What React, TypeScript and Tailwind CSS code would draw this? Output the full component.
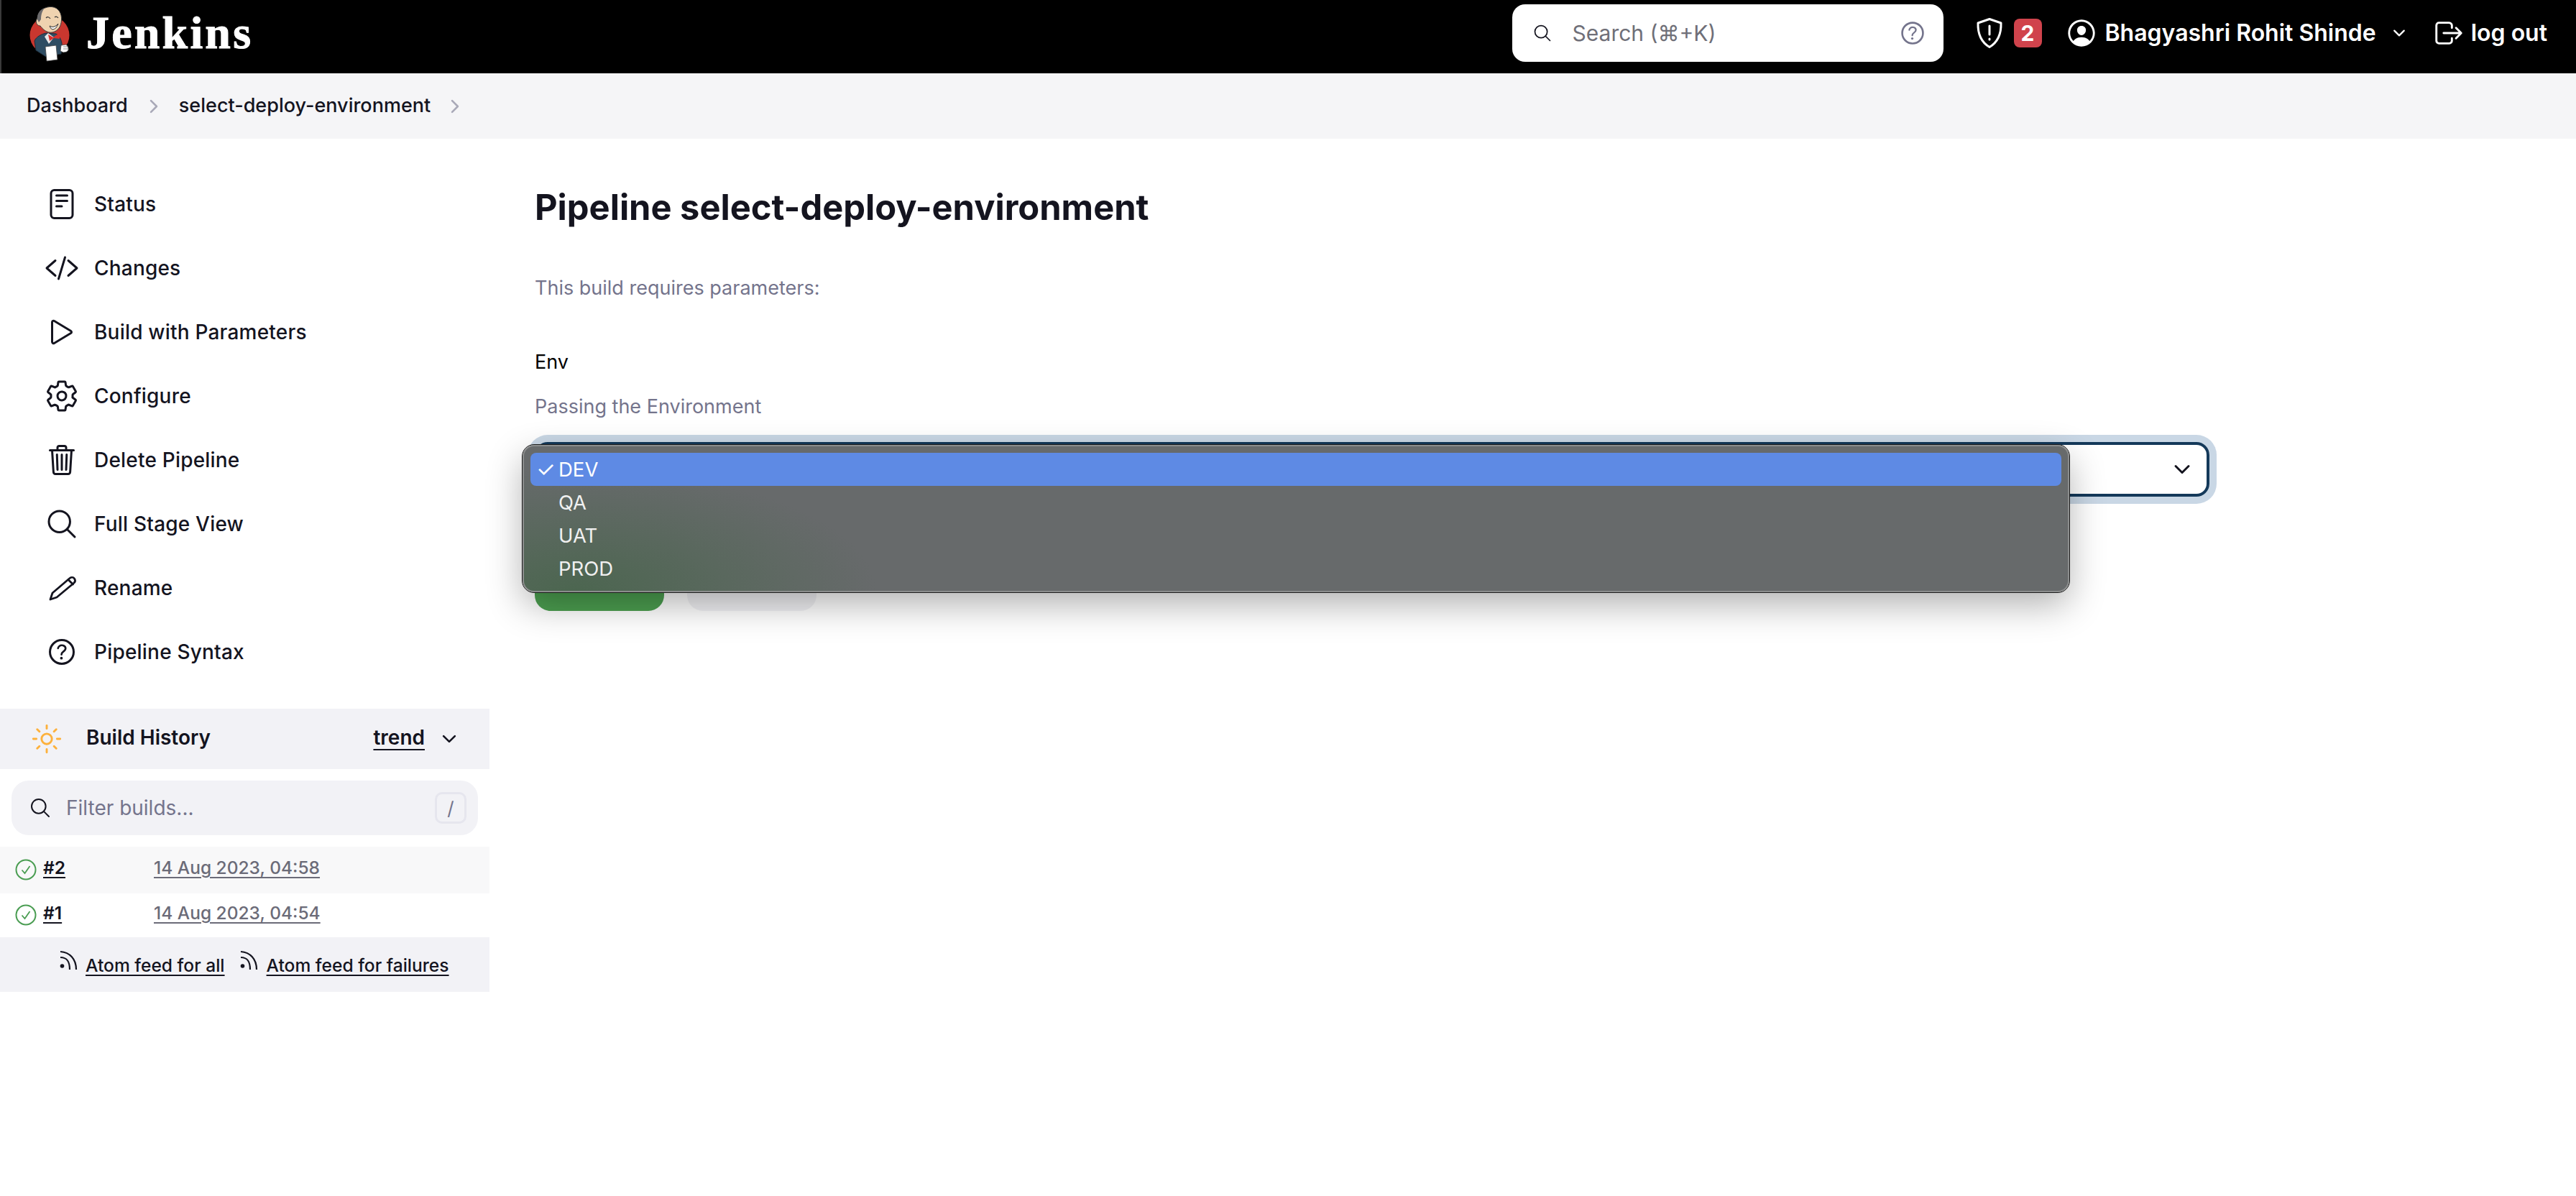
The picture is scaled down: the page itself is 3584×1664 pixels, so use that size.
import React from "react";
import {
  IoReaderOutline,
  IoCodeSlashOutline,
  IoPlayOutline,
  IoSettingsOutline,
  IoTrashOutline,
  IoSearchOutline,
  IoHelpCircleOutline,
  IoSunnyOutline,
  IoChevronDownOutline,
  IoChevronForwardOutline,
  IoPersonCircleOutline,
  IoLogOutOutline,
} from "react-icons/io5";

function Logo() {
  return (
    <svg viewBox="36 5 60 80" className="w-[60px] h-[80px] shrink-0">
      <ellipse cx="67" cy="48" rx="27.5" ry="27" fill="#c9372f" />
      <path d="M46 56C48 50 57 46 62 45L76 46C82 50 85 58 84 64L83 74L62 78L48 69Z" fill="#2f4d63" stroke="#1d2f3d" strokeWidth="1" />
      <path d="M50 24C52 12 62 8 70 8.500C80 9.500 84 18 83.500 27C83 36 79 42 71 44C63 45.500 57 39 54 35C50 35 47.500 31 48.500 27Z" fill="#efd3b0" stroke="#3b3b3b" strokeWidth="1" />
      <path d="M50 26C49 18 54 12 60 10C56 15 55 21 55 26L52 30Z" fill="#6b6a6c" />
      <path d="M62 24Q65 21 68 25M74 23Q77 21 79 24" stroke="#333" strokeWidth="1.200" fill="none" />
      <path d="M67 35Q73 39 79 32Q76 40 71 40Q68 39 67 35Z" fill="#fff" stroke="#333" strokeWidth="1" />
      <path d="M65 45L73 51L66 60L60 50Z" fill="#e8e8e8" />
      <path d="M65 47L72 51L76 48L81 46L81 53L73 52L67 56Z" fill="#d8302c" />
      <path d="M61 64L76 62L78 82L63 84Z" fill="#fff" stroke="#444" strokeWidth="0.800" />
      <path d="M83 62L90 61Q94 64 93 69Q91 72 86 72L82 70Z" fill="#fff" stroke="#444" strokeWidth="0.800" />
      <path d="M86 64L92 64M86 67L92 67" stroke="#666" strokeWidth="0.700" />
    </svg>
  );
}

function Feed() {
  return (
    <svg viewBox="0 0 26 30" className="w-[26px] h-[30px] shrink-0" fill="none" stroke="#14141f" strokeWidth="2.200">
      <circle cx="4.500" cy="22" r="2.800" fill="#14141f" stroke="none" />
      <path d="M2 10C11 10 15 15 15 27" />
      <path d="M2 2C15 3 24 12 24 27" />
    </svg>
  );
}

function OkIcon() {
  return (
    <svg viewBox="0 0 30 30" className="w-[30px] h-[30px] shrink-0 -mt-[2px]" fill="none" stroke="#4a9d52">
      <circle cx="15" cy="15" r="13.500" strokeWidth="2" />
      <path d="M9.500 15.500L13.500 20L20.500 10" strokeWidth="1.800" />
    </svg>
  );
}

function Pencil(props: { className?: string }) {
  return (
    <svg viewBox="0 0 48 48" className={props.className} fill="none" stroke="currentColor" strokeWidth="2.800" strokeLinejoin="round" strokeLinecap="round">
      <path d="M8 40L11 31L35 10.500C37 9 40 9 41.500 11C43 13 42.500 15.500 41 17L17 37Z" />
      <path d="M33 12.500L39.500 19" />
    </svg>
  );
}

function Shield() {
  return (
    <svg viewBox="0 0 40 44" className="w-[40px] h-[44px] shrink-0" fill="none" stroke="#fff" strokeWidth="3" strokeLinejoin="round" strokeLinecap="round">
      <path d="M20 2.500L36 8C36.500 24 31 35 20 41.500C9 35 3.500 24 4 8Z" />
      <path d="M20 12L20 24M20 30L20 31" />
    </svg>
  );
}

const items = [
  ["Status", IoReaderOutline],
  ["Changes", IoCodeSlashOutline],
  ["Build with Parameters", IoPlayOutline],
  ["Configure", IoSettingsOutline],
  ["Delete Pipeline", IoTrashOutline],
  ["Full Stage View", IoSearchOutline],
  ["Rename", Pencil],
  ["Pipeline Syntax", IoHelpCircleOutline],
] as const;

export default function App() {
  return (
    <div className="min-h-[1664px] bg-white text-[#14141f] font-['Inter',sans-serif] text-[28px]">
      <header className="h-[102px] bg-black border-l-2 border-[#3a3a3a] flex items-center text-white pl-[36px] pr-[40px] pb-[10px]">
        <Logo />
        <span className="ml-[22px] font-['Liberation_Serif',serif] font-bold text-[64px] leading-none tracking-[3.2px] [-webkit-text-stroke:1px_white]">Jenkins</span>
        <div className="ml-auto w-[600px] h-[80px] bg-white rounded-[18px] flex items-center pl-[28px] pr-[22px] text-[#6f6f78] font-normal">
          <IoSearchOutline className="w-[28px] h-[28px] text-[#14141f]" />
          <span className="ml-[28px] text-[30px]">Search (⌘+K)</span>
          <IoHelpCircleOutline className="ml-auto w-[42px] h-[42px] text-[#74748c]" />
        </div>
        <span className="ml-[44px]"><Shield /></span>
        <span className="ml-[14px] w-[39px] h-[40px] rounded-[8px] bg-[#d0434c] flex items-center justify-center font-bold text-[30px]">2</span>
        <IoPersonCircleOutline className="ml-[32px] w-[46px] h-[46px]" />
        <span className="ml-[10px] font-semibold text-[32px] whitespace-nowrap">Bhagyashri Rohit Shinde</span>
        <IoChevronDownOutline className="ml-[20px] w-[24px] h-[24px]" />
        <IoLogOutOutline className="ml-[34px] w-[46px] h-[46px]" />
        <span className="ml-[8px] font-semibold text-[32px]">log out</span>
      </header>

      <nav className="h-[91px] bg-[#f5f5f7] flex items-center pl-[37px] font-medium text-[27px]">
        <span>Dashboard</span>
        <IoChevronForwardOutline className="ml-[22px] w-[28px] h-[28px] text-[#a9a9b8]" />
        <span className="ml-[21px]">select-deploy-environment</span>
        <IoChevronForwardOutline className="ml-[20px] w-[28px] h-[28px] text-[#a9a9b8]" />
      </nav>

      <div className="flex">
        <aside className="w-[681px] shrink-0 pt-[46px]">
          <div className="flex flex-col">
            {items.map(([label, Icon]) => (
              <div key={label} className="h-[89px] flex items-center pl-[62px] font-medium tracking-[0.2px]">
                <Icon className="w-[48px] h-[48px] shrink-0" />
                <span className="ml-[21px]">{label}</span>
              </div>
            ))}
          </div>
          <div className="mt-[35px] h-[84px] bg-[#f2f2f6] flex items-center pl-[42px] pr-[42px] font-semibold">
            <IoSunnyOutline className="w-[46px] h-[46px] text-[#fdb13c] shrink-0" />
            <span className="ml-[32px] -mt-[4px]">Build History</span>
            <span className="ml-auto -mt-[4px] underline underline-offset-[6px] decoration-2">trend</span>
            <IoChevronDownOutline className="ml-[20px] w-[28px] h-[28px]" />
          </div>
          <div className="mt-[16px] mx-[16px] h-[76px] rounded-[24px] bg-[#f2f2f6] flex items-center pl-[24px] pr-[16px]">
            <IoSearchOutline className="w-[32px] h-[32px] shrink-0" />
            <span className="ml-[20px] text-[#74748c]">Filter builds...</span>
            <span className="ml-auto w-[44px] h-[44px] rounded-[10px] border-[3px] border-[#e6e6ee] flex items-center justify-center text-[#74748c] text-[26px]">/</span>
          </div>
          <div className="mt-[16px] h-[65px] bg-[#f8f8f9] flex items-center pl-[21px] text-[24.5px]">
            <OkIcon />
            <a className="ml-[9px] w-[154px] -mt-[6px] font-semibold underline underline-offset-4">#2</a>
            <a className="-mt-[6px] text-[#6b6b78] font-medium underline underline-offset-4">14 Aug 2023, 04:58</a>
          </div>
          <div className="h-[61px] flex items-center pl-[21px] text-[24.5px]">
            <OkIcon />
            <a className="ml-[9px] w-[154px] -mt-[6px] font-semibold underline underline-offset-4">#1</a>
            <a className="-mt-[6px] text-[#6b6b78] font-medium underline underline-offset-4">14 Aug 2023, 04:54</a>
          </div>
          <div className="h-[76px] bg-[#f2f2f6] flex items-center pl-[82px] text-[24.6px] font-medium">
            <span className="-mt-[10px]"><Feed /></span>
            <a className="ml-[11px] mt-[2px] underline underline-offset-4">Atom feed for all</a>
            <span className="ml-[20px] -mt-[10px]"><Feed /></span>
            <a className="ml-[12px] mt-[2px] underline underline-offset-4">Atom feed for failures</a>
          </div>
        </aside>

        <main className="pl-[63px] pt-[66px]">
          <h1 className="text-[48.8px] leading-[60px] font-bold">Pipeline select-deploy-environment</h1>
          <p className="mt-[62px] leading-[40px] text-[27px] text-[#74748c]">This build requires parameters:</p>
          <p className="mt-[63px] leading-[40px] text-[27px] font-normal text-black">Env</p>
          <p className="mt-[22px] leading-[40px] text-[27px] text-[#74748c]">Passing the Environment</p>
          <div className="relative mt-[29px] w-[2330px] h-[76px]">
            <div className="h-full rounded-[18px] border-[4px] border-[#14395a] shadow-[0_0_0_10px_#c9d7e5] flex items-center justify-end pr-[18px]">
              <IoChevronDownOutline className="w-[32px] h-[32px] text-[#14141f]" />
            </div>
            <div className="absolute z-10 left-[-17px] top-[4px] w-[2152px] h-[205px] rounded-[16px] border-[2px] border-[#8b8d8d] outline outline-[1.5px] outline-[#1c1c1c] bg-[radial-gradient(ellipse_420px_170px_at_70px_100%,#4c6650,#676a6b)] shadow-[0_18px_50px_rgba(0,0,0,0.3)] pt-[9px] px-[9px] text-[27.5px] text-[#f0f0f0] font-normal">
              {["DEV", "QA", "UAT", "PROD"].map((o, i) => (
                <div key={o} className={"h-[46px] flex items-center rounded-[8px] " + (i === 0 ? "bg-[#5e8ae4] text-white" : "")}>
                  <span className="w-[39px] pl-[8px] text-[30px] leading-none">{i === 0 ? "✓" : ""}</span>
                  <span className="mt-[1px]">{o}</span>
                </div>
              ))}
            </div>
          </div>
          <div className="mt-[83px] flex gap-[32px]">
            <button aria-label="Build" className="w-[180px] h-[76px] rounded-[22px] bg-[#4c9f50]" />
            <button aria-label="Cancel" className="w-[180px] h-[76px] rounded-[22px] bg-[#f2f2f5]" />
          </div>
        </main>
      </div>
    </div>
  );
}
